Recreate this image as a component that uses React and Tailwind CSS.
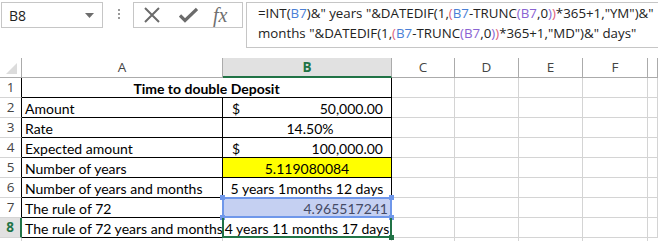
import React from 'react';

const W = ['w-[22px]', 'w-[201px]', 'w-[169px]', 'w-[63px]', 'w-[64px]', 'w-[64px]', 'w-[65px]', 'w-[10px]'];

const B7 = 'text-[#4a7fd6]';
const PAREN = 'text-[#e0607a]';
const PURP = 'text-[#8a63d2]';

function Handle({ pos, color }) {
  return <div className={`absolute w-[5px] h-[5px] ${pos} ${color}`} />;
}

function FormulaBar() {
  return (
    <div className="flex h-[58px] font-['Open_Sans',sans-serif]">
      <div className="ml-[1px] mt-[2px] w-[102px] h-[26px] border border-[#c6c6c6] flex items-center justify-between pl-[7px] pr-[8px] text-[14px] text-[#222]">
        <span>B8</span>
        <svg width="9" height="5" viewBox="0 0 9 5"><path d="M0 0h9L4.5 5z" fill="#6d6d6d" /></svg>
      </div>
      <div className="ml-[15px] mt-[9px] flex flex-col gap-[2px] h-[12px]">
        <div className="w-[2px] h-[2px] bg-[#9a9a9a]" />
        <div className="w-[2px] h-[2px] bg-[#9a9a9a]" />
        <div className="w-[2px] h-[2px] bg-[#9a9a9a]" />
      </div>
      <div className="ml-[13px] mt-[2px] w-[110px] h-[26px] border border-[#c6c6c6] flex items-center pl-[9px]">
        <svg width="18" height="16" viewBox="0 0 18 16">
          <path d="M2 1l14 14M16 1L2 15" stroke="#6b6b6b" strokeWidth="2" fill="none" />
        </svg>
        <svg className="ml-[18px]" width="19" height="16" viewBox="0 0 19 16">
          <path d="M1 8.5l5 5L18 2" stroke="#6b6b6b" strokeWidth="3.2" fill="none" />
        </svg>
        <span className="ml-[15px] font-['Liberation_Serif',serif] italic text-[20px] leading-none text-[#707070]">fx</span>
      </div>
      <div className="ml-[3px] mt-[2px] flex-1 h-[46px] border border-r-0 border-[#c6c6c6] pl-[11px] pt-[1px] text-[13.3px] leading-[19.5px] text-[#222] whitespace-nowrap overflow-hidden">
        <div>
          =INT(<span className={B7}>B7</span>)&amp;" years "&amp;DATEDIF(1,<span className={PAREN}>(</span>
          <span className={B7}>B7</span>-TRUNC<span className={PURP}>(</span><span className={PURP}>B7</span>,0
          <span className={PURP}>)</span><span className={PAREN}>)</span>*365+1,"YM")&amp;"
        </div>
        <div>
          months "&amp;DATEDIF(1,<span className={PAREN}>(</span><span className={B7}>B7</span>-TRUNC
          <span className={PURP}>(</span><span className={PURP}>B7</span>,0<span className={PURP}>)</span>
          <span className={PAREN}>)</span>*365+1,"MD")&amp;" days"
        </div>
      </div>
    </div>
  );
}

function HeaderRow() {
  const letters = ['C', 'D', 'E', 'F', ''];
  return (
    <div className="flex h-[20px] font-['Open_Sans',sans-serif] text-[13.5px] text-[#444]">
      <div className={`${W[0]} h-full border-r border-b border-[#ababab] flex items-end justify-end pr-[4px] pb-[3px]`}>
        <svg width="11" height="11" viewBox="0 0 11 11"><path d="M11 0v11H0z" fill="#dcdcdc" /></svg>
      </div>
      <div className={`${W[1]} h-full border-r border-b border-[#ababab] flex items-center justify-center`}>A</div>
      <div className={`${W[2]} h-full bg-[#e1e1e1] border-r border-[#ababab] border-b-2 border-b-[#217346] flex items-center justify-center font-bold text-[#217346]`}>B</div>
      {letters.map((l, i) => (
        <div key={i} className={`${W[i + 3]} h-full border-r border-b border-[#ababab] flex items-center justify-center`}>{l}</div>
      ))}
    </div>
  );
}

function EmptyTail() {
  return (
    <>
      {[3, 4, 5, 6, 7].map((i) => (
        <div key={i} className={`${W[i]} h-full border-r border-b border-[#d4d4d4]`} />
      ))}
    </>
  );
}

function RowNum({ n, active }) {
  return (
    <div
      className={`${W[0]} h-full border-b border-[#d4d4d4] flex items-center justify-center font-['Open_Sans',sans-serif] text-[13.5px] ${
        active ? 'border-r-2 border-r-[#217346] bg-[#e1e1e1] font-bold text-[#217346]' : 'border-r border-r-black text-[#444]'
      }`}
    >
      {n}
    </div>
  );
}

function Row({ n, a, b, bClass = '', active, children }) {
  return (
    <div className="flex h-[20px]">
      <RowNum n={n} active={active} />
      <div className={`${W[1]} h-full border-r border-b border-black pl-[3px] leading-[18px] pt-[2px] whitespace-nowrap`}>{a}</div>
      <div className={`${W[2]} h-full border-r border-b border-black relative leading-[18px] pt-[2px] whitespace-nowrap ${bClass}`}>
        {b}
        {children}
      </div>
      <EmptyTail />
    </div>
  );
}

function Money({ v }) {
  return (
    <div className="flex justify-between pl-[9px] pr-[8px]">
      <span>$</span>
      <span>{v}</span>
    </div>
  );
}

export default function App() {
  return (
    <div className="w-[658px] h-[241px] overflow-hidden bg-white text-black">
      <FormulaBar />
      <HeaderRow />
      <div className="font-[Lato,sans-serif] text-[14px]">
        <div className="flex h-[20px]">
          <RowNum n={1} />
          <div className="w-[370px] h-full border-r border-b border-black text-center font-bold leading-[18px] pt-[2px]">
            Time to double Deposit
          </div>
          <EmptyTail />
        </div>
        <Row n={2} a="Amount" b={<Money v="50,000.00" />} />
        <Row n={3} a="Rate" b={<div className="text-center pl-[6px]">14.50%</div>} />
        <Row n={4} a="Expected amount" b={<Money v="100,000.00" />} />
        <Row n={5} a="Number of years" bClass="bg-[#ffff00]" b={<div className="text-center">5.119080084</div>} />
        <Row n={6} a="Number of years and months" b={<div className="text-center">5 years 1months 12 days</div>} />
        <Row n={7} a="The rule of 72" bClass="bg-[#c5d0f2]" b={<div className="text-right pr-[3px] text-[#444a66]">4.965517241</div>}>
          <div className="absolute -left-[1px] -top-[1px] -right-[1px] -bottom-[1px] border-2 border-[#6f97ea]" />
          <Handle pos="-left-[3px] -top-[3px]" color="bg-[#6f97ea]" />
          <Handle pos="-right-[3px] -top-[3px]" color="bg-[#6f97ea]" />
          <Handle pos="-left-[3px] -bottom-[3px]" color="bg-[#6f97ea]" />
          <Handle pos="-right-[3px] -bottom-[3px]" color="bg-[#6f97ea]" />
        </Row>
        <Row n={8} a="The rule of 72 years and months" active b={<div className="text-center">4 years 11 months 17 days</div>}>
          <div className="absolute -left-[1px] top-0 -right-[1px] -bottom-[1px] border-2 border-t-0 border-[#217346]" />
          <Handle pos="-right-[3px] -bottom-[3px]" color="bg-[#217346]" />
        </Row>
        <div className="flex h-[20px]">
          <div className={`${W[0]} h-full border-r border-[#d4d4d4]`} />
          <div className={`${W[1]} h-full border-r border-[#d4d4d4]`} />
          <div className={`${W[2]} h-full border-r border-[#d4d4d4]`} />
          {[3, 4, 5, 6].map((i) => (
            <div key={i} className={`${W[i]} h-full border-r border-[#d4d4d4]`} />
          ))}
        </div>
      </div>
    </div>
  );
}
